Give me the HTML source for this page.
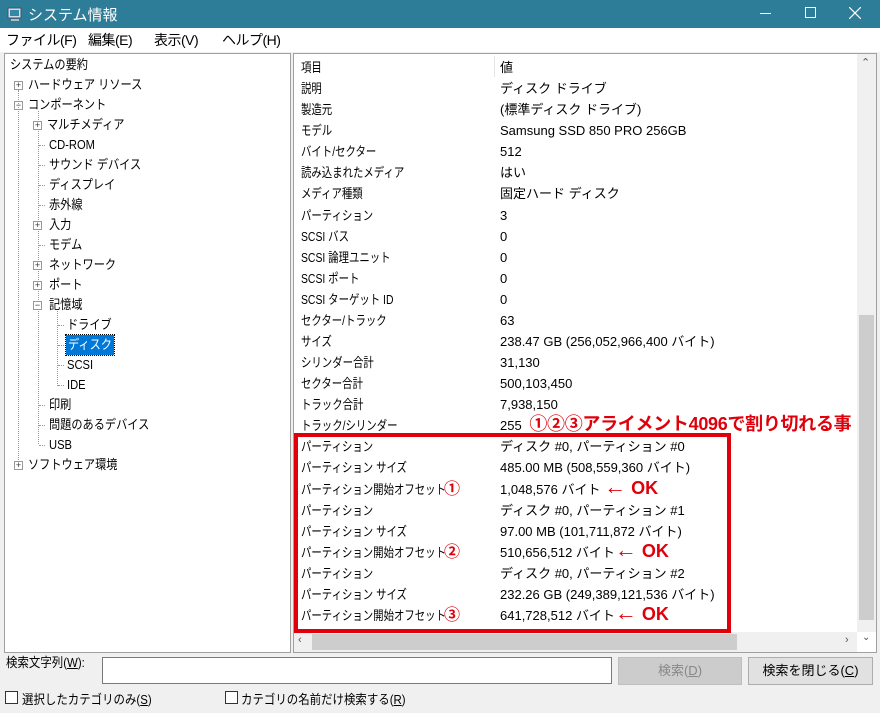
<!DOCTYPE html>
<html><head><meta charset="utf-8"><style>
*{margin:0;padding:0;box-sizing:border-box}
body{width:880px;height:713px;overflow:hidden;background:#f0f0f0;font-family:"Liberation Sans","Noto Sans CJK JP",sans-serif;font-size:13px;color:#000;position:relative}
.abs{position:absolute;white-space:nowrap}
#title{left:0;top:0;width:880px;height:28px;background:#2d7c98;color:#fff;font-size:15px}
#menu{left:0;top:28px;width:880px;height:24px;background:#fff;font-size:14px;letter-spacing:-0.5px}
.panel{background:#fff;border:1px solid #a0a0a0}
.t{position:absolute;line-height:20px;height:20px;white-space:nowrap;transform:scaleX(0.86);transform-origin:left center}
.box{position:absolute;width:9px;height:9px;border:1px solid #999;background:#fff;font-size:9px;line-height:7px;text-align:center;color:#333}
.dot{position:absolute;border-top:1px dotted #999;width:6px}
.r{position:absolute;left:301px;line-height:21px;height:21px;white-space:nowrap;transform:scaleX(0.8);transform-origin:left center}
.v{position:absolute;left:500px;line-height:21px;height:21px;white-space:nowrap}
.red{color:#e0000c;font-weight:bold}
.c{position:absolute;left:444px;color:#e0000c;font-weight:bold;font-size:16px;line-height:21px}
.ok{color:#e0000c;font-weight:bold;font-size:18px;line-height:0}
.ok span{font-size:22px;line-height:0}
.btn{position:absolute;border:1px solid #adadad;text-align:center;line-height:26px;height:28px}
.cb{position:absolute;width:13px;height:13px;border:1px solid #333;background:#fff}
.sq{display:inline-block;transform:scaleX(0.88);transform-origin:left center}
</style></head><body>
<div id="title" class="abs">
 <svg style="position:absolute;left:7px;top:7px" width="16" height="15"><rect x="1" y="1" width="13" height="10" fill="#cde" stroke="#456"/><rect x="3" y="3" width="9" height="6" fill="#38a"/><rect x="4" y="12" width="8" height="2" fill="#bbb"/></svg>
 <span style="position:absolute;left:28px;top:4px">システム情報</span>
 <div style="position:absolute;left:760px;top:13px;width:11px;height:1px;background:#fff"></div>
 <div style="position:absolute;left:805px;top:7px;width:11px;height:11px;border:1px solid #fff"></div>
 <svg style="position:absolute;left:849px;top:7px" width="12" height="12"><path d="M0 0L12 12M12 0L0 12" stroke="#fff" stroke-width="1.2"/></svg>
</div>
<div id="menu" class="abs"><span style="position:absolute;left:6px;top:2px">ファイル(F)</span><span style="position:absolute;left:88px;top:2px">編集(E)</span><span style="position:absolute;left:154px;top:2px">表示(V)</span><span style="position:absolute;left:222px;top:2px">ヘルプ(H)</span></div>

<div class="abs panel" style="left:4px;top:53px;width:287px;height:600px"></div>
<div style="position:absolute;left:4px;top:53px;width:287px;height:600px;overflow:hidden">
<div class="t" style="left:6px;top:2px">システムの要約</div>
<div class="box" style="left:10px;top:28px">+</div><div class="t" style="left:24px;top:22px">ハードウェア リソース</div>
<div class="box" style="left:10px;top:48px">−</div><div class="t" style="left:24px;top:42px">コンポーネント</div>
<div style="position:absolute;left:34px;top:58px;height:333px;border-left:1px dotted #999"></div>
<div style="position:absolute;left:14px;top:37px;height:372px;border-left:1px dotted #999"></div>
<div class="box" style="left:29px;top:68px">+</div><div class="t" style="left:43px;top:62px">マルチメディア</div>
<div class="dot" style="left:35px;top:92px"></div><div class="t" style="left:45px;top:82px">CD-ROM</div>
<div class="dot" style="left:35px;top:112px"></div><div class="t" style="left:45px;top:102px">サウンド デバイス</div>
<div class="dot" style="left:35px;top:132px"></div><div class="t" style="left:45px;top:122px">ディスプレイ</div>
<div class="dot" style="left:35px;top:152px"></div><div class="t" style="left:45px;top:142px">赤外線</div>
<div class="box" style="left:29px;top:168px">+</div><div class="t" style="left:45px;top:162px">入力</div>
<div class="dot" style="left:35px;top:192px"></div><div class="t" style="left:45px;top:182px">モデム</div>
<div class="box" style="left:29px;top:208px">+</div><div class="t" style="left:45px;top:202px">ネットワーク</div>
<div class="box" style="left:29px;top:228px">+</div><div class="t" style="left:45px;top:222px">ポート</div>
<div class="box" style="left:29px;top:248px">−</div><div class="t" style="left:45px;top:242px">記憶域</div>
<div style="position:absolute;left:53px;top:258px;height:75px;border-left:1px dotted #999"></div>
<div class="dot" style="left:54px;top:272px"></div><div class="t" style="left:63px;top:262px">ドライブ</div>
<div class="dot" style="left:54px;top:292px"></div><div style="position:absolute;left:62px;top:282px;width:48px;height:20px;background:#0078d7;outline:1px dotted #000"></div><div class="t" style="left:64px;top:282px;color:#fff">ディスク</div>
<div class="dot" style="left:54px;top:312px"></div><div class="t" style="left:63px;top:302px">SCSI</div>
<div class="dot" style="left:54px;top:332px"></div><div class="t" style="left:63px;top:322px">IDE</div>
<div class="dot" style="left:35px;top:352px"></div><div class="t" style="left:45px;top:342px">印刷</div>
<div class="dot" style="left:35px;top:372px"></div><div class="t" style="left:45px;top:362px">問題のあるデバイス</div>
<div class="dot" style="left:35px;top:392px"></div><div class="t" style="left:45px;top:382px">USB</div>
<div class="box" style="left:10px;top:408px">+</div><div class="t" style="left:24px;top:402px">ソフトウェア環境</div>
</div>

<div class="abs panel" style="left:293px;top:53px;width:584px;height:600px"></div>
<div style="position:absolute;left:494px;top:56px;height:21px;border-left:1px solid #e5e5e5"></div>
<div style="position:absolute;left:857px;top:54px;width:19px;height:578px;background:#f0f0f0"></div>
<div style="position:absolute;left:859px;top:315px;width:15px;height:305px;background:#cdcdcd"></div>
<div class="abs" style="left:861px;top:56px;font-size:11px;color:#555">&#8963;</div>
<div class="abs" style="left:862px;top:632px;font-size:10px;color:#555">&#8964;</div>
<div style="position:absolute;left:294px;top:632px;width:563px;height:20px;background:#f0f0f0"></div>
<div style="position:absolute;left:312px;top:634px;width:425px;height:16px;background:#cdcdcd"></div>
<div class="abs" style="left:298px;top:634px;font-size:11px;color:#555">&lsaquo;</div>
<div class="abs" style="left:845px;top:634px;font-size:11px;color:#555">&rsaquo;</div>

<div class="r" style="top:57px">項目</div><div class="v" style="top:57px">値</div>
<div class="r" style="top:78px">説明</div><div class="v" style="top:78px">ディスク ドライブ</div>
<div class="r" style="top:99px">製造元</div><div class="v" style="top:99px">(標準ディスク ドライブ)</div>
<div class="r" style="top:120px">モデル</div><div class="v" style="top:120px">Samsung SSD 850 PRO 256GB</div>
<div class="r" style="top:141px">バイト/セクター</div><div class="v" style="top:141px">512</div>
<div class="r" style="top:162px">読み込まれたメディア</div><div class="v" style="top:162px">はい</div>
<div class="r" style="top:183px">メディア種類</div><div class="v" style="top:183px">固定ハード ディスク</div>
<div class="r" style="top:205px">パーティション</div><div class="v" style="top:205px">3</div>
<div class="r" style="top:226px">SCSI バス</div><div class="v" style="top:226px">0</div>
<div class="r" style="top:247px">SCSI 論理ユニット</div><div class="v" style="top:247px">0</div>
<div class="r" style="top:268px">SCSI ポート</div><div class="v" style="top:268px">0</div>
<div class="r" style="top:289px">SCSI ターゲット ID</div><div class="v" style="top:289px">0</div>
<div class="r" style="top:310px">セクター/トラック</div><div class="v" style="top:310px">63</div>
<div class="r" style="top:331px">サイズ</div><div class="v" style="top:331px">238.47 GB (256,052,966,400 バイト)</div>
<div class="r" style="top:352px">シリンダー合計</div><div class="v" style="top:352px">31,130</div>
<div class="r" style="top:373px">セクター合計</div><div class="v" style="top:373px">500,103,450</div>
<div class="r" style="top:394px">トラック合計</div><div class="v" style="top:394px">7,938,150</div>
<div class="r" style="top:415px">トラック/シリンダー</div><div class="v" style="top:415px">255 <span class="red" style="font-size:18px;margin-left:4px;letter-spacing:-0.3px;line-height:0">①②③アライメント4096で割り切れる事</span></div>
<div class="r" style="top:436px">パーティション</div><div class="v" style="top:436px">ディスク #0, パーティション #0</div>
<div class="r" style="top:457px">パーティション サイズ</div><div class="v" style="top:457px">485.00 MB (508,559,360 バイト)</div>
<div class="r" style="top:479px">パーティション開始オフセット</div><div class="c" style="top:479px">①</div><div class="v" style="top:479px">1,048,576 バイト <span class="ok"><span>←</span> OK</span></div>
<div class="r" style="top:500px">パーティション</div><div class="v" style="top:500px">ディスク #0, パーティション #1</div>
<div class="r" style="top:521px">パーティション サイズ</div><div class="v" style="top:521px">97.00 MB (101,711,872 バイト)</div>
<div class="r" style="top:542px">パーティション開始オフセット</div><div class="c" style="top:542px">②</div><div class="v" style="top:542px">510,656,512 バイト<span class="ok"><span>←</span> OK</span></div>
<div class="r" style="top:563px">パーティション</div><div class="v" style="top:563px">ディスク #0, パーティション #2</div>
<div class="r" style="top:584px">パーティション サイズ</div><div class="v" style="top:584px">232.26 GB (249,389,121,536 バイト)</div>
<div class="r" style="top:605px">パーティション開始オフセット</div><div class="c" style="top:605px">③</div><div class="v" style="top:605px">641,728,512 バイト<span class="ok"><span>←</span> OK</span></div>
<div style="position:absolute;left:294px;top:433px;width:437px;height:200px;border:4px solid #e0000c"></div>

<div class="abs" style="left:6px;top:652px"><span class="sq">検索文字列(<u>W</u>):</span></div>
<div style="position:absolute;left:102px;top:657px;width:510px;height:27px;background:#fff;border:1px solid #7a7a7a"></div>
<div class="btn" style="left:618px;top:657px;width:124px;background:#cccccc;color:#888;border-color:#bfbfbf">検索(<u>D</u>)</div>
<div class="btn" style="left:748px;top:657px;width:125px;background:#e1e1e1">検索を閉じる(<u>C</u>)</div>
<div class="cb" style="left:5px;top:691px"></div><div class="abs" style="left:22px;top:689px"><span class="sq">選択したカテゴリのみ(<u>S</u>)</span></div>
<div class="cb" style="left:225px;top:691px"></div><div class="abs" style="left:241px;top:689px"><span class="sq">カテゴリの名前だけ検索する(<u>R</u>)</span></div>
</body></html>
